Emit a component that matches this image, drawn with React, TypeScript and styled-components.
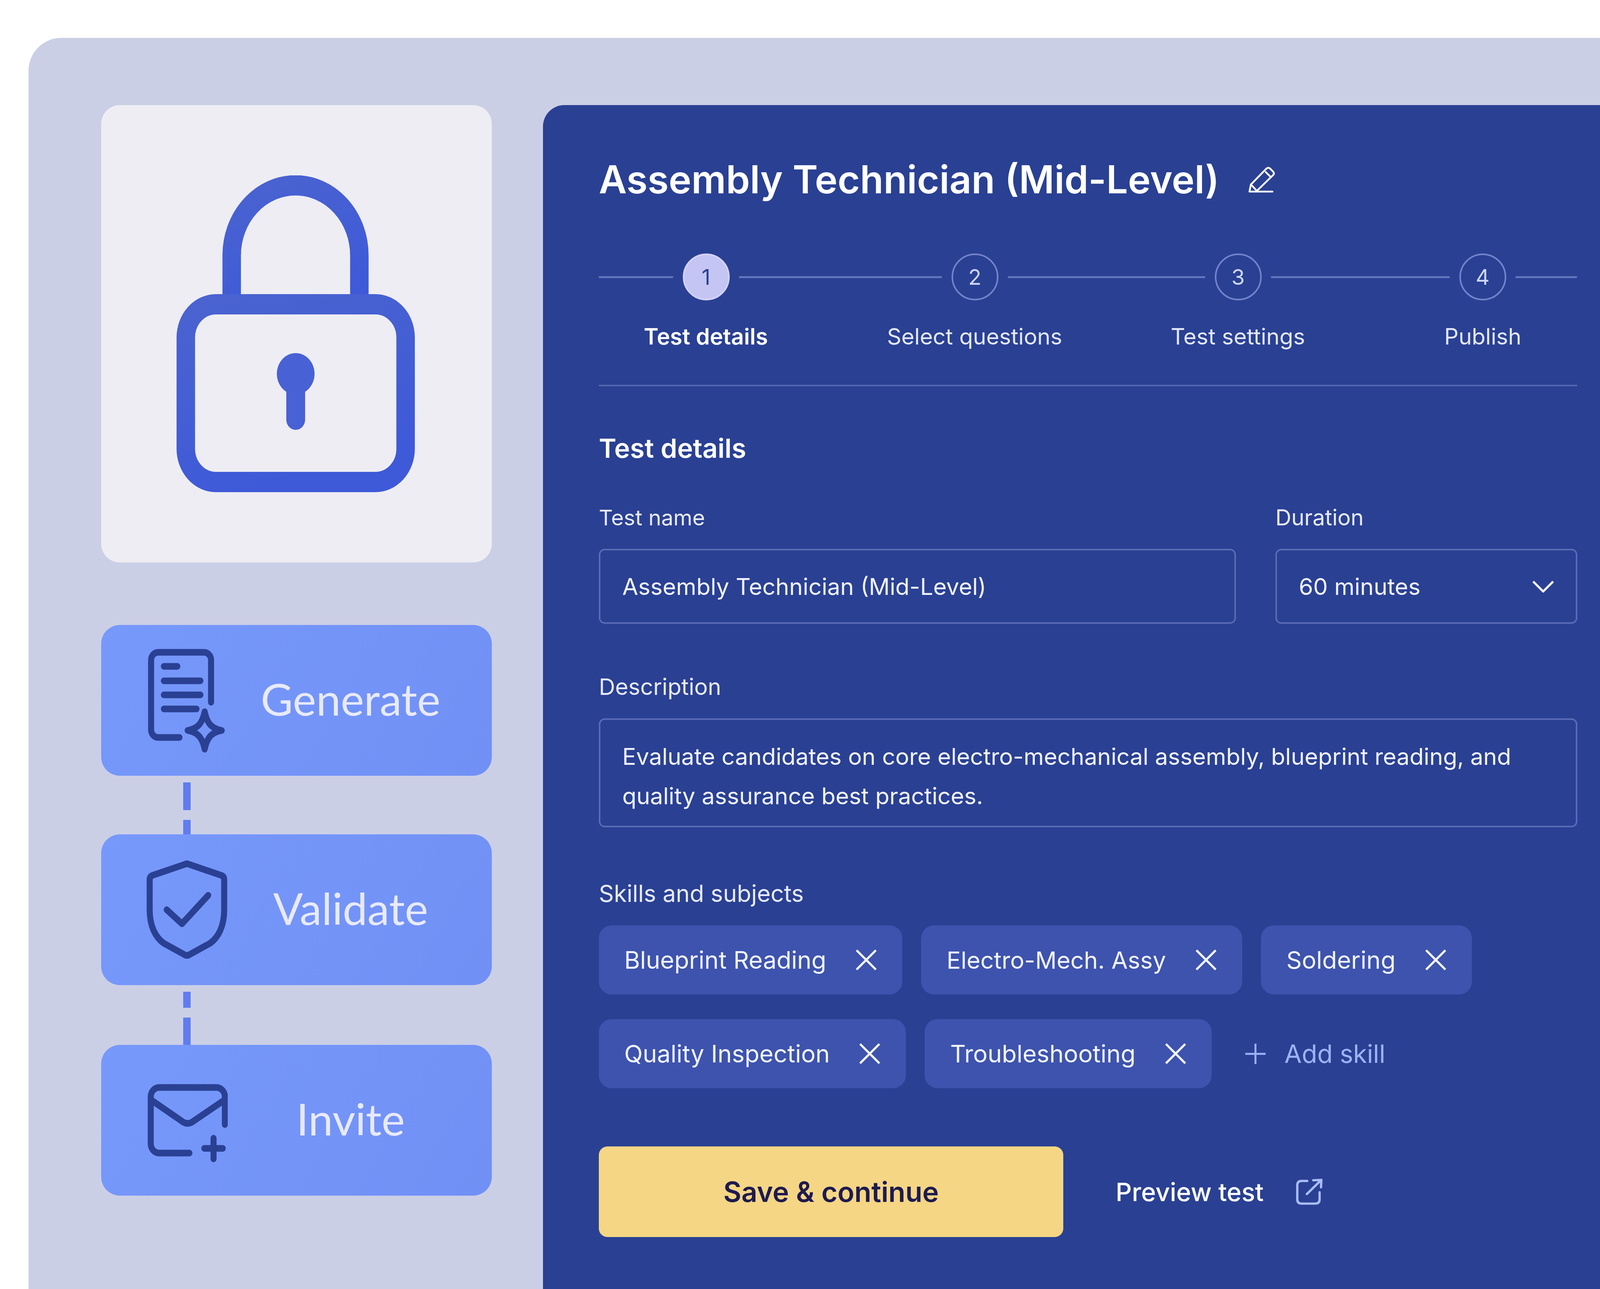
import React from 'react';
import styled, { createGlobalStyle } from 'styled-components';

// the browser window comes out 4096 wide, not 4500, so horizontal sizes and
// font sizes are the reference's times 0.91; vertical positions stay as they are
const GlobalStyle = createGlobalStyle`
  html, body {
    margin: 0;
    padding: 0;
    background: #ffffff;
  }
  * {
    box-sizing: border-box;
  }
`;

const Page = styled.div`
  width: 4096px;
  height: 3300px;
  padding: 97px 0 0 73px;
  overflow: hidden;
  display: flex;
  font-family: Inter, 'Noto Sans', sans-serif;
`;

const Shell = styled.div`
  flex: 1;
  padding: 172px 0 0 186px;
  display: flex;
  gap: 131px;
  background: #cbcfe6;
  border-radius: 84px 0 0 0;
`;

const LeftColumn = styled.div`
  width: 1000px;
  flex-shrink: 0;
  display: flex;
  flex-direction: column;
`;

const LockCard = styled.div`
  height: 1171px;
  margin-bottom: 160px;
  padding-right: 5px;
  display: flex;
  align-items: center;
  justify-content: center;
  background: #eeedf3;
  border-radius: 48px;
`;

const ActionButton = styled.div`
  height: 386px;
  flex-shrink: 0;
  padding-left: 106px;
  display: flex;
  align-items: center;
  background: linear-gradient(120deg, #7799fb, #7190f5);
  border-radius: 48px;
  font-family: Lato, sans-serif;
  font-size: 113px;
  color: #e8eafa;
`;

const ActionIcon = styled.div`
  width: 218px;
  flex-shrink: 0;
  display: flex;
`;

const ActionLabel = styled.span`
  flex: 1;
  margin-right: 47px;
  padding-bottom: 10px;
  text-align: center;
`;

const Connector = styled.div<{ $height: number }>`
  height: ${p => p.$height}px;
  flex-shrink: 0;
  padding: 17px 0 0 210px;
  display: flex;
  flex-direction: column;
  gap: 25px;
`;

const Dash = styled.span<{ $height: number }>`
  width: 19px;
  height: ${p => p.$height}px;
  background: #5f7df0;
`;

const Panel = styled.div`
  flex: 1;
  padding: 126px 0 0 143px;
  background: #2a4093;
  border-radius: 55px 0 0 0;
  color: #ffffff;
`;

const Content = styled.div`
  width: 2505px;
`;

const TitleRow = styled.div`
  display: flex;
  align-items: center;
  gap: 73px;
`;

const Title = styled.h1`
  margin: 0;
  font-size: 98.3px;
  line-height: 130px;
  font-weight: 600;
`;

const Rail = styled.div`
  margin-top: 124px;
  display: flex;
  align-items: center;
  gap: 24.5px;
`;

const RailLine = styled.span<{ $length: number }>`
  width: ${p => p.$length}px;
  height: 5px;
  background: #6375bc;
`;

const StepCircle = styled.span<{ $active?: boolean }>`
  width: 120px;
  height: 120px;
  flex-shrink: 0;
  display: flex;
  align-items: center;
  justify-content: center;
  border-radius: 50%;
  border: 4px solid ${p => (p.$active ? '#d3d3f8' : '#7384cb')};
  background: ${p => (p.$active ? '#c5c5f3' : 'transparent')};
  color: ${p => (p.$active ? '#2a4093' : '#cfd8f8')};
  font-size: 55px;
`;

const LabelRow = styled.div`
  margin-top: 52px;
  display: flex;
`;

const StepLabel = styled.span<{ $left: number; $active?: boolean }>`
  width: 480px;
  margin-left: ${p => p.$left}px;
  text-align: center;
  font-size: 57.3px;
  line-height: 80px;
  font-weight: ${p => (p.$active ? 600 : 400)};
  color: ${p => (p.$active ? '#ffffff' : '#e4e8fb')};
`;

const Divider = styled.div`
  margin-top: 84px;
  height: 4px;
  background: #5166b0;
`;

const SectionTitle = styled.h2`
  margin: 108px 0 0;
  font-size: 68px;
  line-height: 100px;
  font-weight: 600;
`;

const FieldRow = styled.div`
  margin-top: 88px;
  display: grid;
  grid-template-columns: 1631px 773px;
  column-gap: 101px;
`;

const FieldLabel = styled.div<{ $top?: number; $size?: number }>`
  margin-top: ${p => p.$top ?? 0}px;
  font-size: ${p => p.$size ?? 56.4}px;
  line-height: 80px;
  color: #e8ebfb;
`;

const InputBox = styled.div`
  height: 192px;
  margin-top: 40px;
  padding: 0 56px;
  display: flex;
  align-items: center;
  justify-content: space-between;
  border: 4px solid #5a6bb5;
  border-radius: 15px;
  font-size: 59.2px;
  color: #f2f4fe;
`;

const TextBox = styled.div`
  height: 279px;
  margin-top: 41px;
  padding: 43px 56px 0;
  border: 4px solid #5a6bb5;
  border-radius: 15px;
  font-size: 59.2px;
  line-height: 101px;
  color: #f2f4fe;
`;

const ChipList = styled.div`
  margin-top: 42px;
  display: flex;
  flex-wrap: wrap;
  align-items: center;
  gap: 63px 48px;
`;

const Chip = styled.div<{ $size: number }>`
  height: 177px;
  padding: 0 65px;
  display: flex;
  align-items: center;
  gap: 75px;
  background: #3d53ad;
  border-radius: 33px;
  font-size: ${p => p.$size}px;
  color: #f2f4fe;
`;

const AddSkill = styled.div`
  margin-left: 38px;
  display: flex;
  align-items: center;
  gap: 48px;
  font-size: 64.6px;
  color: #9db3f7;
`;

const Actions = styled.div`
  margin-top: 149px;
  display: flex;
  align-items: center;
`;

const SaveButton = styled.button`
  width: 1189px;
  height: 232px;
  border: none;
  border-radius: 22px;
  background: #f4d684;
  color: #1e1a50;
  font-family: inherit;
  font-size: 71px;
  font-weight: 600;
`;

const PreviewLink = styled.div`
  margin-left: 134px;
  display: flex;
  align-items: center;
  gap: 77px;
  font-size: 64.6px;
  font-weight: 500;
`;

const steps = [
  { n: 1, name: 'Test details', left: 34 },
  { n: 2, name: 'Select questions', left: 208 },
  { n: 3, name: 'Test settings', left: 194 },
  { n: 4, name: 'Publish', left: 147 },
];

const railLengths = [190, 519, 505, 457, 157];

const skills = [
  { name: 'Blueprint Reading', size: 61.9 },
  { name: 'Electro-Mech. Assy', size: 60.6 },
  { name: 'Soldering', size: 61.9 },
  { name: 'Quality Inspection', size: 61.9 },
  { name: 'Troubleshooting', size: 61.9 },
];

const LockIcon = () => (
  <svg width="610" height="811" viewBox="0 0 670 811" preserveAspectRatio="none" fill="none">
    <defs>
      <linearGradient id="lockBlue" x1="0" y1="0" x2="0.4" y2="1">
        <stop offset="0" stopColor="#4a63d0" />
        <stop offset="1" stopColor="#3f5ad8" />
      </linearGradient>
    </defs>
    <g stroke="url(#lockBlue)" strokeWidth="52">
      <path d="M155 330V205a179.5 179.5 0 0 1 359 0v125" />
      <rect x="26" y="330" width="618" height="455" rx="85" />
    </g>
    <circle cx="335" cy="508" r="53" fill="#4861d4" />
    <path d="M335 520v105" stroke="#4861d4" strokeWidth="53" strokeLinecap="round" />
  </svg>
);

const DocIcon = () => (
  <svg width="218" height="290" viewBox="0 0 240 290" preserveAspectRatio="none" fill="none" stroke="#2a4093" strokeWidth="17" strokeLinecap="round" strokeLinejoin="round">
    <path d="M193 150V42a20 20 0 0 0-20-20H44a20 20 0 0 0-20 20v178a20 20 0 0 0 20 20h60" />
    <path d="M60 58h38M60 95h103M60 131h103M60 167h92" />
    <path d="M175 174c7 31 20 43 48 48-28 5-41 17-48 48-7-31-20-43-48-48 28-5 41-17 48-48z" />
  </svg>
);

const ShieldIcon = () => (
  <svg width="218" height="280" viewBox="0 0 240 280" preserveAspectRatio="none" fill="none" stroke="#2a4093" strokeWidth="17" strokeLinecap="round" strokeLinejoin="round">
    <path d="M125 22l97 30q8 3 8 11v77c0 40-15 70-40 86l-60 30q-5 2-10 0l-60-30c-25-16-40-46-40-86V63q0-8 8-11z" />
    <path d="M68 140l43 36 74-73" />
  </svg>
);

const MailIcon = () => (
  <svg width="218" height="220" viewBox="0 0 240 220" preserveAspectRatio="none" fill="none" stroke="#2a4093" strokeWidth="17" strokeLinecap="round" strokeLinejoin="round">
    <path d="M232 121V50a24 24 0 0 0-24-24H47a24 24 0 0 0-24 24v120a24 24 0 0 0 24 24h85" />
    <path d="M24 58l91 57q12 6 24 0l92-57" />
    <path d="M174 182h52M200 156v53" />
  </svg>
);

const PencilIcon = () => (
  <svg width="69" height="73" viewBox="0 0 76 80" fill="none" stroke="#ffffff" strokeWidth="5" strokeLinecap="round" strokeLinejoin="round">
    <path d="M4 73l4-20L52 8q6-4 10 0l9 9q4 5 0 9L23 73H4z" />
    <path d="M50 18l12 12M8 53l14 15M23 73h46" />
  </svg>
);

const CloseIcon = () => (
  <svg width="55" height="55" viewBox="0 0 60 60" fill="none" stroke="#f2f4fe" strokeWidth="6">
    <path d="M3 3l54 54M57 3L3 57" />
  </svg>
);

const PlusIcon = () => (
  <svg width="52" height="52" viewBox="0 0 57 57" fill="none" stroke="#9db3f7" strokeWidth="5.5">
    <path d="M28.5 0v57M0 28.5h57" />
  </svg>
);

const ChevronIcon = () => (
  <svg width="55" height="31" viewBox="0 0 60 34" fill="none" stroke="#f2f4fe" strokeWidth="6">
    <path d="M2 3l28 28L58 3" />
  </svg>
);

const ExternalIcon = () => (
  <svg width="77" height="75" viewBox="0 0 85 82" fill="none" stroke="#aabdf8" strokeWidth="6.5" strokeLinecap="round" strokeLinejoin="round">
    <path d="M38 10H22Q10 10 10 22v40q0 12 12 12h39q12 0 12-12V42" />
    <path d="M37 47L78 7M55 8l23-1-1 21" />
  </svg>
);

export default function App() {
  return (
    <Page>
      <GlobalStyle />
      <Shell>
        <LeftColumn>
          <LockCard>
            <LockIcon />
          </LockCard>
          <ActionButton>
            <ActionIcon><DocIcon /></ActionIcon>
            <ActionLabel>Generate</ActionLabel>
          </ActionButton>
          <Connector $height={150}>
            <Dash $height={71} />
            <Dash $height={37} />
          </Connector>
          <ActionButton>
            <ActionIcon><ShieldIcon /></ActionIcon>
            <ActionLabel>Validate</ActionLabel>
          </ActionButton>
          <Connector $height={153}>
            <Dash $height={42} />
            <Dash $height={72} />
          </Connector>
          <ActionButton>
            <ActionIcon><MailIcon /></ActionIcon>
            <ActionLabel>Invite</ActionLabel>
          </ActionButton>
        </LeftColumn>
        <Panel>
          <Content>
            <TitleRow>
              <Title>Assembly Technician (Mid-Level)</Title>
              <PencilIcon />
            </TitleRow>
            <Rail>
              {steps.map((step, i) => (
                <React.Fragment key={step.n}>
                  <RailLine $length={railLengths[i]} />
                  <StepCircle $active={i === 0}>{step.n}</StepCircle>
                </React.Fragment>
              ))}
              <RailLine $length={railLengths[4]} />
            </Rail>
            <LabelRow>
              {steps.map((step, i) => (
                <StepLabel key={step.n} $left={step.left} $active={i === 0}>{step.name}</StepLabel>
              ))}
            </LabelRow>
            <Divider />
            <SectionTitle>Test details</SectionTitle>
            <FieldRow>
              <div>
                <FieldLabel $size={55.5}>Test name</FieldLabel>
                <InputBox>Assembly Technician (Mid-Level)</InputBox>
              </div>
              <div>
                <FieldLabel>Duration</FieldLabel>
                <InputBox>60 minutes<ChevronIcon /></InputBox>
              </div>
            </FieldRow>
            <FieldLabel $top={121} $size={57.9}>Description</FieldLabel>
            <TextBox>
              Evaluate candidates on core electro-mechanical assembly, blueprint reading, and quality assurance best practices.
            </TextBox>
            <FieldLabel $top={129} $size={60}>Skills and subjects</FieldLabel>
            <ChipList>
              {skills.map(skill => (
                <Chip key={skill.name} $size={skill.size}>{skill.name}<CloseIcon /></Chip>
              ))}
              <AddSkill><PlusIcon />Add skill</AddSkill>
            </ChipList>
            <Actions>
              <SaveButton>Save &amp; continue</SaveButton>
              <PreviewLink>Preview test<ExternalIcon /></PreviewLink>
            </Actions>
          </Content>
        </Panel>
      </Shell>
    </Page>
  );
}
